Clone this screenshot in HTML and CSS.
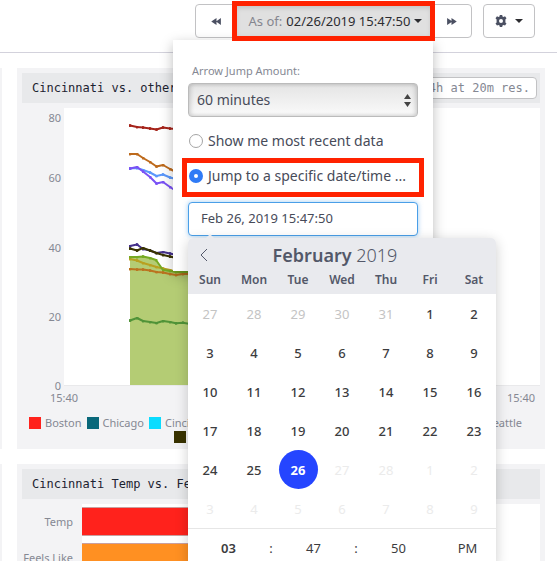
FILE: index.html
```html
<!DOCTYPE html>
<html lang="en">
<head>
<meta charset="utf-8">
<title>Dashboard</title>
<link rel="stylesheet" href="styles.css">
</head>
<body>
<header class="toolbar">
  <div class="time-nav">
    <div class="group">
      <button class="btn step" aria-label="Back"><svg width="11" height="7" viewBox="0 0 12 8"><path d="M6 0v8L0 4zM11 0v8L5.500 4z"/></svg></button>
      <button class="btn as-of highlight"><span class="muted">As of:</span> 02/26/2019 15:47:50 <i class="caret"></i></button>
      <button class="btn step" aria-label="Forward"><svg width="11" height="7" viewBox="0 0 12 8"><path d="M1 0v8l6-4zM6 0v8l6-4z"/></svg></button>
    </div>
    <form class="popup">
      <label class="small-label" for="jump">Arrow Jump Amount:</label>
      <div class="select-wrap">
        <select id="jump"><option>60 minutes</option></select>
        <svg width="7" height="13" viewBox="0 0 7 13"><path d="M3.500 0L7 5H0zM0 8h7l-3.500 5z"/></svg>
      </div>
      <label class="choice"><input type="radio" name="mode"> Show me most recent data</label>
      <label class="choice highlight"><input type="radio" name="mode" checked> Jump to a specific date/time ...</label>
      <input class="date-input" type="text" aria-label="Date and time" value="Feb 26, 2019 15:47:50">
      <div class="calendar">
        <div class="cal-head">
          <div class="month-row">
            <button type="button" class="prev" aria-label="Previous month"><svg width="8" height="14" viewBox="0 0 8 14"><path d="M7 1L1 7l6 6"/></svg></button>
            <div class="month"><b>February</b> 2019</div>
          </div>
          <div class="week names"><span>Sun</span><span>Mon</span><span>Tue</span><span>Wed</span><span>Thu</span><span>Fri</span><span>Sat</span></div>
        </div>
        <div class="week days">
          <button type="button" class="out">27</button><button type="button" class="out">28</button><button type="button" class="out">29</button><button type="button" class="out">30</button><button type="button" class="out">31</button><button type="button">1</button><button type="button">2</button>
          <button type="button">3</button><button type="button">4</button><button type="button">5</button><button type="button">6</button><button type="button">7</button><button type="button">8</button><button type="button">9</button>
          <button type="button">10</button><button type="button">11</button><button type="button">12</button><button type="button">13</button><button type="button">14</button><button type="button">15</button><button type="button">16</button>
          <button type="button">17</button><button type="button">18</button><button type="button">19</button><button type="button">20</button><button type="button">21</button><button type="button">22</button><button type="button">23</button>
          <button type="button">24</button><button type="button">25</button><button type="button" class="selected">26</button><button type="button" class="off">27</button><button type="button" class="off">28</button><button type="button" class="off">1</button><button type="button" class="off">2</button>
          <button type="button" class="off">3</button><button type="button" class="off">4</button><button type="button" class="off">5</button><button type="button" class="off">6</button><button type="button" class="off">7</button><button type="button" class="off">8</button><button type="button" class="off">9</button>
        </div>
        <div class="time">
          <input class="hour" type="text" aria-label="Hour" value="03"><span>:</span>
          <input type="text" aria-label="Minute" value="47"><span>:</span>
          <input type="text" aria-label="Second" value="50">
          <button type="button">PM</button>
        </div>
      </div>
    </form>
  </div>
  <button class="btn gear" aria-label="Settings">
    <svg width="12" height="12" viewBox="0 0 12 12"><path fill-rule="evenodd" d="M4.800 0h2.400l.3 1.600 1 .5 1.500-.8 1.500 2-1.100 1.200v2.900l1.100 1.200-1.500 2-1.500-.7-1 .5-.3 1.600H4.800l-.3-1.600-1-.5-1.500.7-1.500-2 1.100-1.200V4.500L.500 3.300l1.500-2 1.500.8 1-.5zM6 4a2 2 0 100 4 2 2 0 000-4z"/></svg>
    <i class="caret"></i>
  </button>
</header>

<main class="board">
  <section class="card"></section>
  <section class="card">
    <h2>Cincinnati vs. other<span class="res">24h at 20m res.</span></h2>
    <div class="chart">
      <svg class="y-axis" viewBox="0 0 42 282">
        <text x="39" y="14">80</text><text x="39" y="74">60</text><text x="39" y="144">40</text><text x="39" y="213">20</text><text x="39" y="282">0</text>
      </svg>
      <svg class="plot">
        <defs><marker id="dot" viewBox="0 0 2 2" refX="1" refY="1" markerWidth="3" markerHeight="3" markerUnits="userSpaceOnUse"><circle cx="1" cy="1" r="1" fill="context-stroke"/></marker></defs>
        <path fill="#b4cc74" d="M66 149l7 0 6-.5 7 1.500 6 2 7 10 7 1 6 1h30V277H66z"/>
        <g class="lines">
          <path stroke="#a5231a" d="M66 17.500L73 19l6 .5 7 1 6.500 1L99 19.500l7 1 6 .5"/>
          <path stroke="#bd6a1c" d="M66 46h7l6 4 7 4 6.500 4.500L99 57l7 4 6 3 12 5"/>
          <path stroke="#5b98fb" d="M66 60.500L73 60l6 2 7 2.500 6.500 3.500 6.500-1.500 7 3 6 1.500"/>
          <path stroke="#7a52f5" d="M66 60.500L73 59l6 4.500 7 5.500 6.500 6.500L99 74l7 5 6 4"/>
          <path stroke="#45318b" d="M66 138l7-1.500 6 4.500 7 1.500 6.500 2.500 6.500-1 7 1.500 6 1.500"/>
          <path stroke="#393300" d="M66 140.500l7 2 6-2.500 7 2.500 6.500 2.500 6.500 2 7 1.500 6 1.500"/>
          <path stroke="#b9a020" d="M66 151l7 1.500 6 2.500 7 2 6.500 2 6.500 1.500 7 1.500 6 2 18 2"/>
          <path stroke="#76aa23" d="M66 149h7l6-.5 7 1.500 6 2 7 10 7 1 6 1h18"/>
          <path stroke="#bb731f" d="M66 161l7 .5h6l7 1 6.500 1.500 6.500.5 7 1.500 6 1 7-1 12 0"/>
          <path stroke="#509338" d="M66 212.500l7-2.500 6 3 7 1 6.500 1 6.500-2 7 1 6 1.300 7-.6 7 1.300"/>
        </g>
      </svg>
    </div>
    <div class="x-axis"><span>15:40</span><span>15:40</span></div>
    <div class="legend">
      <span><i class="boston"></i>Boston</span><span><i class="chicago"></i>Chicago</span><span><i class="cincinnati"></i>Cincinnati</span><span class="last">Seattle</span>
    </div>
    <div class="legend second"><i class="olive"></i></div>
  </section>
  <section class="card"></section>
  <section class="card">
    <h2>Cincinnati Temp vs. Feels Like</h2>
    <div class="bars">
      <span>Temp</span><div class="track"><div class="bar temp" style="width:60%"></div></div>
      <span>Feels Like</span><div class="track"><div class="bar feels" style="width:55%"></div></div>
    </div>
  </section>
</main>
</body>
</html>
```
FILE: styles.css
```css
* { box-sizing: border-box; }
body {
  margin: 0;
  height: 100vh;
  overflow: hidden;
  background: #fff;
  color: #474b59;
  font: 13px/20px "Noto Sans", sans-serif;
}
button, input, select { font: inherit; color: inherit; margin: 0; }
button { background: none; border: 0; padding: 0; }
svg { display: block; fill: #4b5062; }

.toolbar {
  display: flex;
  justify-content: flex-end;
  gap: 11px;
  height: 53px;
  padding: 4px 22px 0 0;
  border-bottom: 1px solid #d3d2dc;
}
.time-nav { position: relative; height: 34px; }
.group { display: flex; height: 34px; border: 1px solid #c2c2c4; border-radius: 4px; }
.btn { display: flex; align-items: center; justify-content: center; gap: 4px; }
.step { width: 40px; }
.as-of {
  width: 195px;
  padding-left: 4px;
  background: #e0e0e0;
  color: #2c2c30;
  box-shadow: inset 0 3px 5px #0002;
}
.muted { color: #85868f; }
.caret { border: 4px solid transparent; border-top-color: #2c2c30; border-bottom: 0; }
.gear { width: 52px; height: 34px; gap: 8px; border: 1px solid #c2c2c4; border-radius: 4px; }

.highlight { position: relative; }
.highlight::after {
  content: "";
  position: absolute;
  z-index: 4;
  inset: -4px;
  border: 5px solid #ff2200;
}

.popup {
  position: absolute;
  z-index: 2;
  top: 36px;
  left: -22px;
  width: 260px;
  padding: 21px 15px 35px;
  background: #fff;
  box-shadow: 0 4px 12px #0004;
}
.small-label { display: block; padding-left: 4px; font-size: 11px; color: #858893; }
.select-wrap { position: relative; margin: 2px 0 14px; }
.select-wrap svg { position: absolute; right: 7px; top: 11px; fill: #444; }
.select-wrap select {
  display: block;
  appearance: none;
  width: 100%;
  height: 34px;
  padding: 0 8px;
  border: 1px solid #bbb;
  border-radius: 4px;
  background: linear-gradient(#e4e4e4, #fafafa);
  box-shadow: inset 2px 0 4px #0002, inset -2px 0 4px #0002;
  font-size: 14px;
}
.choice { display: flex; align-items: center; gap: 5px; height: 20px; padding-left: 1px; font-size: 14px; white-space: nowrap; }
.choice.highlight { margin: 15px 0 16px; }
.choice.highlight::after { inset: -8px -6px -11px; }
.choice input {
  appearance: none;
  flex: none;
  width: 14px;
  height: 14px;
  border: 1px solid #a5a5a5;
  border-radius: 50%;
  background: #fff;
}
.choice input:checked { border: 5px solid #2f7bf6; }
.date-input {
  display: block;
  width: 100%;
  height: 34px;
  padding: 0 12px 2px;
  border: 1px solid #4a9fe8;
  border-radius: 4px;
  outline: 0;
  box-shadow: 0 0 5px #4a9fe888;
}

.calendar {
  position: absolute;
  top: 198px;
  left: 15px;
  width: 308px;
  border-radius: 5px;
  background: #fff;
  box-shadow: 0 3px 13px #0003;
  color: #3c3c3e;
}
.calendar::before {
  content: "";
  position: absolute;
  left: 18px;
  top: -4px;
  border: 4px solid transparent;
  border-bottom-color: #e9eaee;
  border-top: 0;
}
.cal-head { height: 56px; padding-top: 2px; border-radius: 5px 5px 0 0; background: #e9eaee; color: #535869; }
.month-row { display: grid; grid-template-columns: 32px 1fr 46px; align-items: center; height: 30px; }
.prev svg { margin: 0 auto; fill: none; stroke: #535869; }
.month { text-align: center; font-size: 18px; font-weight: 300; }
.month b { font-weight: 600; }
.week { display: grid; grid-template-columns: repeat(7, 1fr); justify-items: center; text-align: center; }
.names { font-size: 12px; font-weight: 600; }
.days button { width: 39px; height: 39px; border-radius: 50%; font-weight: 500; }
.days .out { color: #c4c4c4; font-weight: 400; }
.days .off { color: #ebebeb; font-weight: 400; }
.days .selected { background: #2545ff; color: #fff; font-weight: 700; }
.time {
  display: grid;
  grid-template-columns: 81px 4px 81px 4px 81px 1fr;
  align-items: center;
  height: 39px;
  border-top: 1px solid #e6e6e6;
  text-align: center;
}
.time input { width: 100%; padding: 0; border: 0; background: none; text-align: center; }
.time .hour { font-weight: 600; }

.board {
  display: grid;
  grid-template-columns: 2px 1fr;
  grid-template-rows: 381px 180px;
  gap: 15px;
  padding: 15px 12px 0 0;
}
.card { min-width: 0; background: #f3f3f5; color: #858893; font-size: 11px; }
.card:nth-child(even) { padding: 5px; }
h2 {
  display: flex;
  align-items: center;
  justify-content: space-between;
  height: 30px;
  margin: 0 0 5px;
  padding: 0 3px 0 10px;
  background: #e8e9eb;
  color: #1c2230;
  font: 12px/20px "DejaVu Sans Mono", monospace;
  white-space: nowrap;
}
.res { padding: 0 6px; border: 1px solid #c2c2c4; border-radius: 4px; background: #fff; color: #858893; }
.chart { display: grid; grid-template-columns: 42px 1fr; height: 282px; }
.y-axis { width: 42px; height: 282px; overflow: visible; fill: #858893; text-anchor: end; }
.plot { width: 100%; height: 278px; background: #fff; border-bottom: 1px solid #e9e9eb; }
.lines { fill: none; stroke-width: 2; stroke-linejoin: round; }
.lines path { marker: url(#dot); }
.x-axis { display: flex; justify-content: space-between; padding: 0 5px 0 28px; line-height: 16px; }
.legend { display: flex; gap: 5px; padding: 0 18px 0 7px; margin-top: 10px; line-height: 14px; }
.legend span { display: flex; align-items: center; gap: 4px; }
.legend i { width: 12px; height: 12px; }
.legend .last { margin-left: auto; }
.legend.second { margin-top: 1px; padding-left: 152px; }
.boston { background: #ff221c; }
.chicago { background: #09687a; }
.cincinnati { background: #0adcff; }
.olive { background: #393300; }
.bars { display: grid; grid-template-columns: 60px 1fr; }
.bars span { padding-right: 9px; line-height: 36px; text-align: right; white-space: nowrap; }
.track { height: 36px; padding-top: 3px; background: #fff; }
.bar { height: 29px; border: solid #c9a0a0; border-width: 1px 0; }
.temp { background: #ff221c; }
.feels { background: #ff9022; }
```
